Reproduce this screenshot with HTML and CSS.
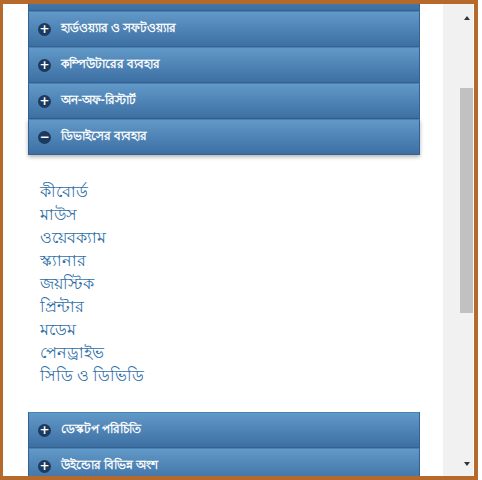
FILE: index.html
```html
<!DOCTYPE html>
<html lang="bn">
<head>
  <meta charset="UTF-8" />
  <title>কম্পিউটার পাঠ</title>
  <link rel="stylesheet" href="styles.css">
</head>
<body>
  <div class="popup">
    <div class="viewport">
      <div class="accordion">
        <div class="acc-head stub"></div>
        <h3 class="acc-head"><span class="acc-icon">+</span>হার্ডওয়্যার ও সফটওয়্যার</h3>
        <h3 class="acc-head"><span class="acc-icon">+</span>কম্পিউটারের ব্যবহার</h3>
        <h3 class="acc-head"><span class="acc-icon">+</span>অন-অফ-রিস্টার্ট</h3>
        <h3 class="acc-head active"><span class="acc-icon">&minus;</span>ডিভাইসের ব্যবহার</h3>
        <ul class="acc-body">
          <li><a href="#">কীবোর্ড</a></li>
          <li><a href="#">মাউস</a></li>
          <li><a href="#">ওয়েবক্যাম</a></li>
          <li><a href="#">স্ক্যানার</a></li>
          <li><a href="#">জয়স্টিক</a></li>
          <li><a href="#">প্রিন্টার</a></li>
          <li><a href="#">মডেম</a></li>
          <li><a href="#">পেনড্রাইভ</a></li>
          <li><a href="#">সিডি ও ডিভিডি</a></li>
        </ul>
        <h3 class="acc-head"><span class="acc-icon">+</span>ডেস্কটপ পরিচিতি</h3>
        <h3 class="acc-head"><span class="acc-icon">+</span>উইন্ডোর বিভিন্ন অংশ</h3>
      </div>
    </div>
    <div class="scrollbar">
      <span class="arrow up"></span>
      <div class="track">
        <div class="thumb"></div>
      </div>
      <span class="arrow down"></span>
    </div>
  </div>
</body>
</html>
```

FILE: styles.css
```css
body {
  margin: 0;
  background: #fff;
  font-family: "Noto Sans", "DejaVu Sans", sans-serif;
  overflow: hidden;
}
.popup {
  width: 471px;
  height: 472px;
  border-style: solid;
  border-color: #b5692b;
  border-width: 4px 4px 4px 3px;
  display: flex;
  background: #fff;
}
.viewport {
  width: 440px;
  overflow: hidden;
}
.accordion {
  margin: -29px 0 0 25px;
  width: 392px;
}
.acc-head {
  margin: 0;
  height: 34px;
  display: flex;
  align-items: center;
  padding-left: 9px;
  font-size: 12px;
  font-weight: bold;
  color: #fff;
  background: linear-gradient(#6199c8, #3d6fa3);
  border: 1px solid #336290;
  border-top-color: #4c80b3;
}
.acc-head.active {
  box-shadow: 0 2px 4px rgba(0,0,0,0.3);
  position: relative;
}
.acc-icon {
  width: 13px;
  height: 13px;
  border-radius: 50%;
  background: #1c3a5e;
  color: #fff;
  font-size: 12px;
  line-height: 13px;
  text-align: center;
  margin-right: 10px;
  font-family: "DejaVu Sans", sans-serif;
}
.acc-body {
  list-style: none;
  margin: 0;
  padding: 25px 0 25px 12px;
}
.acc-body li {
  height: 23px;
  line-height: 23px;
  font-size: 16px;
}
.acc-body a {
  color: #2c6ea6;
  text-decoration: none;
}
.scrollbar {
  width: 30px;
  background: #f1f1f1;
  display: flex;
  flex-direction: column;
  align-items: flex-end;
}
.arrow {
  width: 13px;
  height: 16px;
  display: flex;
  align-items: center;
  justify-content: center;
}
.arrow::before {
  content: "";
  border-left: 3px solid transparent;
  border-right: 3px solid transparent;
}
.arrow.up {
  margin-top: 6px;
}
.arrow.up::before {
  border-bottom: 4px solid #333;
}
.arrow.down {
  margin-bottom: 4px;
}
.arrow.down::before {
  border-top: 4px solid #333;
}
.track {
  flex: 1;
  width: 13px;
}
.thumb {
  margin-top: 62px;
  height: 225px;
  background: #c1c1c1;
}
```
